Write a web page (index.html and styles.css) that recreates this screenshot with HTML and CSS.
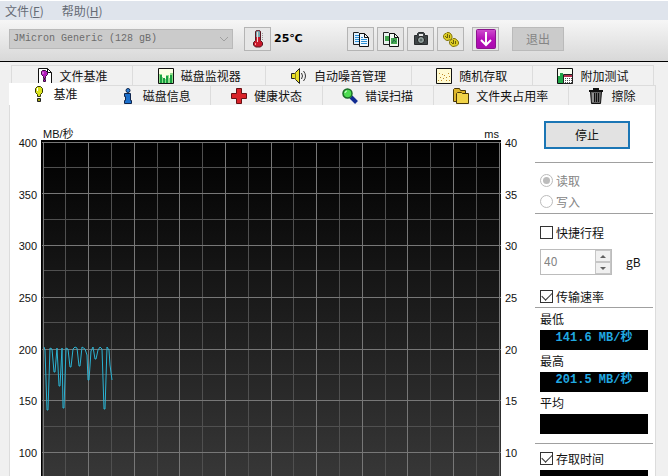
FILE: index.html
```html
<!DOCTYPE html>
<html lang="zh-CN">
<head>
<meta charset="utf-8">
<title>基准</title>
<link rel="stylesheet" href="styles.css">
</head>
<body>
<nav class="menubar">
  <button type="button">文件(<u>F</u>)</button>
  <button type="button">帮助(<u>H</u>)</button>
</nav>

<header class="toolbar">
  <div class="drive">
    <select aria-label="JMicron Generic" disabled><option>JMicron Generic (128 gB)</option></select>
    <svg class="chevron" width="10" height="6" viewBox="0 0 10 6"><path d="M1 1l4 4 4-4" fill="none" stroke="#a0a0a0"/></svg>
  </div>
  <div class="temp">
    <button type="button" class="tool">
      <svg width="16" height="20" viewBox="0 0 16 20"><path d="M5.500 3q0-1.500 2-1.500h1q2 0 2 1.500v8.500l2 2V16l-2 2h-5l-2-2v-2.500l2-2z" fill="#c9182a" stroke="#571822"/><path d="M6 3l1-1h2l1 1v5H6z" fill="#6fa9b0"/><path d="M7.500 3v10" stroke="#f4d4d4"/><path d="M12.500 4v7" stroke="#999" stroke-dasharray="1 1"/><path d="M5.500 14v2" stroke="#ff9c9c"/></svg>
    </button>
    <output>25℃</output>
  </div>
  <div class="tools">
    <button type="button" class="tool">
      <svg width="18" height="17" viewBox="0 0 18 17"><path d="M1.500 1.500h5l3 3v9h-8z" fill="#dff1ff" stroke="#222"/><path d="M3 4.500h4M3 6.500h4M3 8.500h4M3 10.500h4" stroke="#2d8fd5"/><path d="M7.500 2.500h5l4 4v9h-9z" fill="#eef8ff" stroke="#111"/><path d="M12.500 2.500v4h4" fill="none" stroke="#111"/><path d="M9 6.500h2M9 8.500h6M9 10.500h6M9 12.500h6" stroke="#2d8fd5"/></svg>
    </button>
    <button type="button" class="tool">
      <svg width="18" height="17" viewBox="0 0 18 17"><path d="M1.500 1.500h5l3 3v9h-8z" fill="#e8f3ee" stroke="#222"/><path d="M3 5h4v5H3z" fill="#3fa64c"/><path d="M7.500 2.500h5l4 4v9h-9z" fill="#f2fbf4" stroke="#111"/><path d="M12.500 2.500v4h4" fill="none" stroke="#111"/><path d="M9 7h6v6H9z" fill="#45a84f"/><path d="M10 12l2-3 2 2M11 8h1" fill="none" stroke="#1c6a4a"/></svg>
    </button>
    <button type="button" class="tool">
      <svg width="18" height="16" viewBox="0 0 18 16"><path d="M2.500 4.500h3v-2l1-1h5l1 1v2h3v9h-13z" fill="#3f4547" stroke="#2a2d2e"/><path d="M7 3h4v2H7z" fill="#e6e6e6"/><circle cx="9" cy="9" r="3.500" fill="#9aa8a6" stroke="#1c1c1c"/><circle cx="9" cy="9" r="1.500" fill="#5d6b68"/></svg>
    </button>
    <button type="button" class="tool">
      <svg width="18" height="17" viewBox="0 0 18 17"><g fill="#dccb22" stroke="#85780f"><path d="M1.500 4.500L3 2.500h1l1-1h2l2 1.500 1 2v2L8.500 9H7l-1 .5H4.500L2.500 8l-1-1.500z"/><path d="M7.500 10.500L9 8.500h1l1-1h2l2 1.500 1.500 2v2L14.500 15H13l-1 .5h-1.500L8.500 14l-1-1.500z"/></g><path d="M3 5l2 2M5.500 3v4M7.500 4v3M9 11l2 2M11.500 9v4M13.500 10v3" stroke="#6b6008"/></svg>
    </button>
    <button type="button" class="tool tool-save">
      <svg width="20" height="20" viewBox="0 0 20 20"><defs><linearGradient id="violet" x1="0" y1="0" x2="0" y2="1"><stop offset="0" stop-color="#cf4ecf"/><stop offset=".5" stop-color="#b50fb8"/><stop offset="1" stop-color="#a90bae"/></linearGradient></defs><rect x=".5" y=".5" width="19" height="19" rx="1" fill="url(#violet)" stroke="#8a148d"/><path d="M10 3v12" stroke="#fff" stroke-width="2"/><path d="M5 11l5 5 5-5" fill="none" stroke="#fff" stroke-width="2"/></svg>
    </button>
    <button type="button" class="exit" disabled>退出</button>
  </div>
</header>

<main class="book">
  <div class="tabs" role="tablist">
    <div class="tabrow back">
      <button type="button" role="tab"><svg width="16" height="16" viewBox="0 0 16 16"><path d="M1.500.5h9l4 4v11h-13z" fill="#fff" stroke="#111"/><path d="M10.500.5v4h4" fill="none" stroke="#111"/><path d="M5.500 2.500h3l2 2v2l-2 2v2h-2v-2l-2-2v-3z" fill="#b51cbd" stroke="#3b0b40"/><path d="M6 4v2" stroke="#f0b0f3"/><path d="M6.500 11.500h2v2h-2z" fill="#b319bd" stroke="#3b0b40"/></svg>文件基准</button>
      <button type="button" role="tab"><svg width="16" height="16" viewBox="0 0 16 16"><path d="M.5.5h15v15H.5z" fill="#fbffe4" stroke="#111"/><path d="M1 6h3v3h1v2h3V7h3v3h1V5h3v10H1z" fill="#8fe08b"/><path d="M2 7h2v8H2zM5 10h2v5H5zM8 8h2v7H8zM12 7h2v8h-2z" fill="#18a040"/></svg>磁盘监视器</button>
      <button type="button" role="tab"><svg width="16" height="16" viewBox="0 0 16 16"><path d="M.5 5.500h3l5-5v15l-5-5h-3z" fill="#e8df28" stroke="#222"/><path d="M4.500 4v8" stroke="#8b841a"/><path d="M10.500 5q2 3 0 6M12.500 3q4 5 0 10" fill="none" stroke="#333"/></svg>自动噪音管理</button>
      <button type="button" role="tab"><svg width="16" height="16" viewBox="0 0 16 16"><path d="M.5.5h15v15H.5z" fill="#fffbd2" stroke="#111"/><path d="M2 12.500h1M4 9.500h1M5 12.500h1M7 10.500h1M8 7.500h1M10 9.500h1M12 5.500h1M13 8.500h1M10 12.500h1M6 6.500h1M3 5.500h1M13 12.500h1" stroke="#bf8b2b"/></svg>随机存取</button>
      <button type="button" role="tab"><svg width="16" height="16" viewBox="0 0 16 16"><path d="M.5.500h15v15H.5z" fill="#f5fff0" stroke="#111"/><path d="M1 8h2v7H1zM3 5h3v10H3z" fill="#20a548"/><path d="M6.500 6.500h9v9h-9z" fill="#fff" stroke="#222"/><path d="M7 8h8" stroke="#b33050" stroke-width="2"/><path d="M8 10.500h7M8 12.500h7M8 14.500h7" stroke="#555" stroke-dasharray="1 1"/></svg>附加测试</button>
    </div>
    <div class="tabrow front">
      <button type="button" role="tab" aria-selected="true" class="active"><svg width="16" height="16" viewBox="0 0 16 16"><path d="M6.500.5h3l2 2v4l-2 2v2h-3v-2l-2-2v-4z" fill="#dbe31c" stroke="#333608"/><path d="M6.500 2v3" stroke="#fff"/><path d="M6.500 12.500h3v3h-3z" fill="#a4a712" stroke="#222"/></svg>基准</button>
      <button type="button" role="tab"><svg width="16" height="16" viewBox="0 0 16 16"><circle cx="8" cy="2.500" r="2" fill="#2b82d9" stroke="#10264d"/><path d="M4.500 5.500h6v7h1v3h-7v-3h1v-4h-1z" fill="#1c70cc" stroke="#10264d"/></svg>磁盘信息</button>
      <button type="button" role="tab"><svg width="16" height="16" viewBox="0 0 16 16"><path d="M5.500.5h5v5h5v5h-5v5h-5v-5h-5v-5h5z" fill="#d92329" stroke="#681014"/></svg>健康状态</button>
      <button type="button" role="tab"><svg width="16" height="16" viewBox="0 0 16 16"><path d="M9 9l5.500 5.500" stroke="#112b91" stroke-width="4"/><circle cx="5.500" cy="5.500" r="4.500" fill="#4ddd50" stroke="#176b25" stroke-width="1.500"/><path d="M3 5q0-2 2-2" fill="none" stroke="#dbffd9"/></svg>错误扫描</button>
      <button type="button" role="tab"><svg width="16" height="16" viewBox="0 0 16 16"><path d="M.5 1.500l1-1h5l1 2h5v11h-12z" fill="#ddb52a" stroke="#473708"/><path d="M3.500 5.500l1-1h4l1 1h6v10h-12z" fill="#f0d348" stroke="#473708"/></svg>文件夹占用率</button>
      <button type="button" role="tab"><svg width="16" height="16" viewBox="0 0 16 16"><path d="M2.500 3.500h11l-1 12h-9z" fill="#666" stroke="#111"/><path d="M1 3h14M5 1h6" stroke="#111" stroke-width="2"/><path d="M6.500 5v9M8.500 5v9M10.500 5v9" stroke="#111"/><path d="M5 5v9" stroke="#bbb"/></svg>擦除</button>
    </div>
  </div>

  <section class="page">
    <div class="chart">
      <div class="units"><span>MB/秒</span><span>ms</span></div>
      <ol class="axis left"><li>400</li><li>350</li><li>300</li><li>250</li><li>200</li><li>150</li><li>100</li></ol>
      <svg class="plot" viewBox="0 0 460 336" preserveAspectRatio="none">
        <defs><linearGradient id="shade" x1="0" y1="0" x2="0" y2="1"><stop offset="0" stop-color="#000"/><stop offset="1" stop-color="#373737"/></linearGradient></defs>
        <path d="M0 0h460v336H0z" fill="url(#shade)"/>
        <path class="minor" d="M24.500 2v334M70.500 2v334M116.500 2v334M161.500 2v334M207.500 2v334M252.500 2v334M298.500 2v334M344.500 2v334M389.500 2v334M435.500 2v334M2 27.500h456M2 79.500h456M2 130.500h456M2 182.500h456M2 234.500h456M2 286.500h456"/>
        <path class="major" d="M2.500 2v334M47.500 2v334M93.500 2v334M138.500 2v334M184.500 2v334M230.500 2v334M275.500 2v334M321.500 2v334M366.500 2v334M412.500 2v334M458.500 2v334M0 2.500h460M0 53.500h460M0 105.500h460M0 157.500h460M0 209.500h460M0 260.500h460M0 312.500h460"/>
        <path d="M0 0h1v336H0z"/>
        <polyline class="rate" points="3,207 4,210 6,270 7,270 9,208 11,209 13,232 14,232 16,208 18,246 19,246 21,208 22,268 23,268 25,208 27,209 29,227 30,227 32,209 34,207 36,208 38,226 39,226 41,207 44,209 46,215 47,240 48,240 50,211 52,207 54,219 55,219 57,210 59,207 61,209 63,269 64,269 66,207 68,210 69,225 71,240"/>
      </svg>
      <ol class="axis right"><li>40</li><li>35</li><li>30</li><li>25</li><li>20</li><li>15</li><li>10</li></ol>
    </div>

    <aside class="side">
      <button type="button" class="stop">停止</button>
      <hr>
      <div class="modes">
        <label class="option off"><input type="radio" name="mode" checked disabled>读取</label>
        <label class="option off"><input type="radio" name="mode" disabled>写入</label>
      </div>
      <hr>
      <label class="option stroke"><input type="checkbox">快捷行程</label>
      <div class="size">
        <div class="spinner">
          <input type="number" id="size" value="40" disabled>
          <div class="steps">
            <button type="button" disabled><svg width="6" height="3" viewBox="0 0 6 3"><path d="M0 3l3-3 3 3z"/></svg></button>
            <button type="button" disabled><svg width="6" height="3" viewBox="0 0 6 3"><path d="M0 0l3 3 3-3z"/></svg></button>
          </div>
        </div>
        <label for="size">gB</label>
      </div>
      <label class="option"><input type="checkbox" checked>传输速率</label>
      <hr>
      <dl class="stats">
        <dt>最低</dt><dd>141.6 MB/秒</dd>
        <dt>最高</dt><dd>201.5 MB/秒</dd>
        <dt>平均</dt><dd></dd>
      </dl>
      <hr>
      <label class="option access"><input type="checkbox" checked>存取时间</label>
      <div class="readout"></div>
    </aside>
  </section>
</main>
</body>
</html>
```

FILE: styles.css
```css
* {
  box-sizing: border-box;
}

body {
  display: flex;
  flex-direction: column;
  margin: 0;
  height: 100vh;
  overflow: hidden;
  background: #f0f0f0;
  color: #111;
  font: 12px/20px "Noto Sans CJK SC", sans-serif;
}

button,
input,
select {
  margin: 0;
  padding: 0;
  color: inherit;
  font: inherit;
}

svg {
  flex: none;
}

.menubar {
  display: flex;
  flex: none;
  gap: 18px;
  height: 20px;
  padding-left: 5px;
  border-top: 1px solid #fff;
  background: #dfe4ec;
  color: #666b75;
}

.menubar button {
  border: 0;
  background: none;
}

.toolbar {
  display: flex;
  flex: none;
  align-items: center;
  height: 42px;
  padding: 0 9px 3px;
  border-bottom: 1px solid #000;
  background: linear-gradient(#f6f6f6, #d8d8d8);
}

.drive {
  display: grid;
  flex: 0 1 224px;
  align-items: center;
}

.drive select,
.chevron {
  grid-area: 1 / 1;
}

.drive select {
  height: 20px;
  padding: 0 3px;
  border: 1px solid #b9b9b9;
  border-radius: 0;
  appearance: none;
  background: #cbcbcb;
  color: #6c6c6c;
  font: 10px/18px "Liberation Mono", monospace;
  opacity: 1;
}

.chevron {
  justify-self: end;
  margin-right: 4px;
}

.temp {
  display: flex;
  align-items: center;
  gap: 3px;
  width: 92px;
  margin: 0 11px;
  color: #000;
  font: 700 11px/20px "DejaVu Sans", "Noto Sans CJK SC", sans-serif;
}

.tools {
  display: flex;
  gap: 3px;
}

.tool {
  display: grid;
  place-items: center;
  width: 27px;
  height: 24px;
  border: 1px solid #b4b4b4;
  background: #e6e6e6;
}

.tool-save {
  margin-left: 5px;
}

.exit {
  width: 52px;
  height: 24px;
  margin-left: 10px;
  border: 1px solid #bababa;
  background: #cbcbcb;
  color: #858585;
}

.book {
  display: flex;
  flex: 1;
  flex-direction: column;
  min-height: 0;
  padding: 3px 12px 0 9px;
}

.tabrow {
  display: flex;
}

.back {
  padding: 0 2px;
}

.tabrow button {
  display: flex;
  flex: 1 1 auto;
  align-items: center;
  justify-content: center;
  gap: 7px;
  height: 20px;
  border: 0 solid #dcdcdc;
  border-width: 1px 1px 0 0;
  background: #f1f1f1;
}

.back button:first-child {
  border-left-width: 1px;
}

.tabrow .active {
  height: 22px;
  margin-top: -2px;
  padding: 0 2px 2px;
  border-color: #fff;
  background: #fff;
}

.page {
  display: grid;
  flex: 1;
  grid-template-columns: 1fr 118px;
  gap: 8px;
  min-height: 0;
  overflow: hidden;
  padding-right: 2px;
  border: 0 solid #dcdcdc;
  border-width: 0 1px;
  background: #fff;
}

.chart {
  display: grid;
  grid-template-columns: 31px 1fr 26px;
  grid-template-rows: 35px 336px;
  font: 11px/12px "Liberation Sans", "Noto Sans CJK SC", sans-serif;
}

.units {
  display: flex;
  grid-column: 2;
  align-items: flex-end;
  justify-content: space-between;
  padding: 0 2px;
}

.axis {
  display: flex;
  flex-direction: column;
  grid-row: 2;
  height: 362px;
  margin: -23px 0 0;
  padding: 0 4px;
  list-style: none;
}

.axis li {
  display: flex;
  flex: 1;
  align-items: center;
}

.left li {
  justify-content: flex-end;
}

.plot {
  grid-row: 2;
  width: 100%;
  height: 336px;
}

.plot path,
.plot polyline {
  vector-effect: non-scaling-stroke;
}

.minor {
  stroke: #505050;
}

.major {
  stroke: #777;
}

.rate {
  fill: none;
  stroke: #2bb3d3;
}

.side {
  padding-top: 16px;
}

.side hr {
  height: 1px;
  margin: 0;
  border: 0;
  background: #a0a0a0;
}

.stop {
  display: block;
  width: 86px;
  height: 28px;
  margin: 0 0 13px 9px;
  border: 2px solid #1b76b5;
  background: #e2e2e2;
}

.modes {
  padding: 7px 0 1px;
}

.option {
  display: flex;
  align-items: center;
  gap: 3px;
  height: 21px;
  padding-left: 5px;
}

.option input {
  display: grid;
  place-items: center;
  width: 13px;
  height: 13px;
  border: 1px solid #333;
  appearance: none;
  background: #fff;
}

.option [type="radio"] {
  border-color: #bcbcbc;
  border-radius: 50%;
}

.option [type="radio"]:checked::before {
  width: 7px;
  height: 7px;
  border-radius: 50%;
  background: #bcbcbc;
  content: "";
}

.option [type="checkbox"]:checked::before {
  width: 9px;
  height: 5px;
  margin-top: -3px;
  border: solid #333;
  border-width: 0 0 1px 1px;
  content: "";
  transform: rotate(-45deg);
}

.off {
  color: #858585;
}

.stroke {
  margin-top: 8px;
}

.size {
  display: flex;
  align-items: center;
  gap: 14px;
  margin: 6px 0 11px 5px;
}

.spinner {
  display: flex;
  width: 72px;
  height: 26px;
  border: 1px solid #bcbcbc;
}

.spinner input {
  flex: 1;
  min-width: 0;
  padding: 0 3px 2px;
  border: 0;
  appearance: textfield;
  background: #fff;
  color: #858585;
}

.steps {
  display: grid;
  width: 16px;
}

.steps button {
  display: grid;
  place-items: center;
  border: 1px solid #c6c6c6;
  background: #f0f0f0;
  fill: #606060;
}

.stats {
  margin: 0 0 9px;
  padding: 0 5px;
}

.stats dt {
  height: 22px;
  line-height: 22px;
}

.stats dd,
.readout {
  height: 20px;
  background: #000;
}

.stats dd {
  margin: 0;
  color: #20a9e2;
  font: 700 12px/16px "Liberation Mono", "Noto Sans CJK SC", monospace;
  text-align: center;
}

.access {
  margin: 4px 0 1px;
}

.readout {
  margin: 0 5px;
}
```
